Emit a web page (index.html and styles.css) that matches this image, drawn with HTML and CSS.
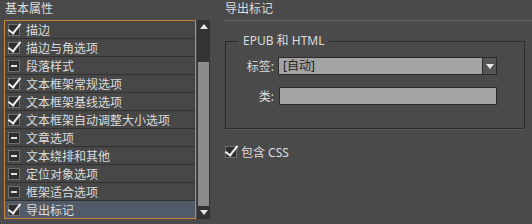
FILE: index.html
```html
<!DOCTYPE html>
<html>

<head>
    <meta charset="utf-8">
    <link rel="stylesheet" href="styles.css">
</head>

<body>

    <div class="dialog">
        <div class="side">
            <div class="side-title">基本属性</div>
            <div class="list-wrap">
                <ul class="list">
                    <li class="row"><span class="box checked"></span>描边</li>
                    <li class="row"><span class="box checked"></span>描边与角选项</li>
                    <li class="row"><span class="box mixed"></span>段落样式</li>
                    <li class="row"><span class="box checked"></span>文本框架常规选项</li>
                    <li class="row"><span class="box checked"></span>文本框架基线选项</li>
                    <li class="row"><span class="box checked"></span>文本框架自动调整大小选项</li>
                    <li class="row"><span class="box mixed"></span>文章选项</li>
                    <li class="row"><span class="box mixed"></span>文本绕排和其他</li>
                    <li class="row"><span class="box mixed"></span>定位对象选项</li>
                    <li class="row"><span class="box mixed"></span>框架适合选项</li>
                    <li class="row selected"><span class="box checked"></span>导出标记</li>
                </ul>
                <div class="scrollbar">
                    <div class="scroll-btn"><span class="tri up"></span></div>
                    <div class="scroll-track"><div class="thumb"></div></div>
                    <div class="scroll-btn"><span class="tri down"></span></div>
                </div>
            </div>
        </div>

        <div class="main">
            <div class="main-title">导出标记</div>
            <fieldset class="group">
                <legend>EPUB 和 HTML</legend>
                <div class="field">
                    <span class="label">标签:</span>
                    <div class="select">
                        <span class="select-value">[自动]</span>
                        <span class="select-btn"><span class="tri down"></span></span>
                    </div>
                </div>
                <div class="field">
                    <span class="label">类:</span>
                    <div class="input"></div>
                </div>
            </fieldset>
            <div class="option"><span class="box checked"></span>包含 CSS</div>
        </div>
    </div>

</body>

</html>
```

FILE: styles.css
```css
body {
    margin: 0;
    background-color: #4a4a4a;
    font-family: "Noto Sans", "Noto Sans CJK SC", sans-serif;
    font-size: 12px;
    color: #dcdcdc;
}

.dialog {
    display: flex;
    width: 532px;
    height: 224px;
}

/* colonne de gauche */
.side {
    width: 211px;
    padding-left: 4px;
}

.side-title {
    height: 20px;
    line-height: 18px;
    padding-left: 1px;
}

.list-wrap {
    display: flex;
    height: 199px;
}

.list {
    list-style: none;
    margin: 0;
    padding: 0;
    width: 190px;
    border: 1px solid #c8863c;
}

.row {
    display: flex;
    align-items: center;
    height: 17px;
    border-bottom: 1px solid #313131;
    background-color: #474747;
    padding-left: 3px;
    gap: 6px;
    white-space: nowrap;
}

.row:last-child {
    border-bottom: none;
}

.row.selected {
    background-color: #505a69;
}

.box {
    position: relative;
    display: inline-block;
    width: 12px;
    height: 12px;
    flex-shrink: 0;
    background-color: #2f2f2f;
    border: 1px solid #707070;
    box-sizing: border-box;
}

.box.checked::after {
    content: "";
    position: absolute;
    left: 2px;
    top: -4px;
    width: 5px;
    height: 11px;
    border-right: 2px solid #f0f0f0;
    border-bottom: 2px solid #f0f0f0;
    transform: rotate(38deg);
    transform-origin: center;
}

.box.mixed::after {
    content: "";
    position: absolute;
    left: 2px;
    top: 4px;
    width: 6px;
    height: 2px;
    background-color: #e0e0e0;
}

.scrollbar {
    display: flex;
    flex-direction: column;
    width: 13px;
    margin-left: 1px;
    background-color: #333;
}

.scroll-btn {
    height: 13px;
    display: flex;
    align-items: center;
    justify-content: center;
}

.scroll-track {
    flex: 1;
    padding-top: 29px;
}

.thumb {
    height: 100%;
    margin: 0 1px;
    background-color: #8c8c8c;
}

.tri {
    width: 0;
    height: 0;
    border-left: 4px solid transparent;
    border-right: 4px solid transparent;
}

.tri.up {
    border-bottom: 5px solid #e8e8e8;
}

.tri.down {
    border-top: 5px solid #e8e8e8;
}

/* colonne de droite */
.main {
    flex: 1;
    padding-left: 9px;
}

.main-title {
    height: 20px;
    line-height: 18px;
    padding-left: 1px;
    border-bottom: 1px solid #666;
}

.group {
    margin: 13px 7px 0 1px;
    padding: 9px 0 23px 0;
    border: 1px solid #2b2b2b;
    box-shadow: 0 1px 0 #5c5c5c;
}

.group legend {
    margin-left: 12px;
    padding: 0 5px;
    line-height: 14px;
}

.field {
    display: flex;
    align-items: center;
    height: 18px;
    margin-bottom: 12px;
}

.field:last-child {
    margin-bottom: 0;
}

.label {
    width: 48px;
    text-align: right;
    margin-right: 4px;
}

.select {
    display: flex;
    width: 219px;
    height: 18px;
    box-sizing: border-box;
    border: 1px solid #2a2a2a;
    background-color: #a4a4a4;
}

.select-value {
    flex: 1;
    color: #222;
    padding-left: 4px;
    line-height: 16px;
}

.select-btn {
    width: 13px;
    display: flex;
    align-items: center;
    justify-content: center;
    background-color: #565656;
    border-left: 1px solid #2a2a2a;
}

.input {
    width: 218px;
    height: 18px;
    margin-left: 1px;
    box-sizing: border-box;
    border: 1px solid #2a2a2a;
    background-color: #a4a4a4;
}

.option {
    display: flex;
    align-items: center;
    gap: 4px;
    margin-top: 14px;
    margin-left: 1px;
}

.option .box {
    width: 12px;
    height: 12px;
}
```
